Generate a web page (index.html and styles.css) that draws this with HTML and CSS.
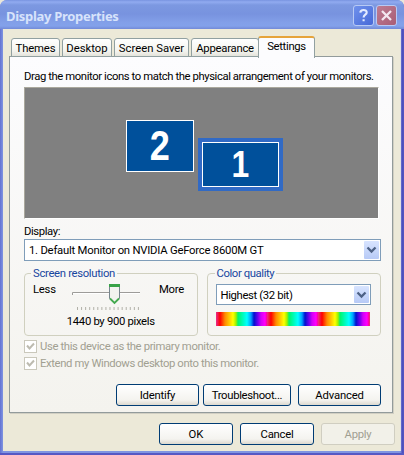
FILE: index.html
```html
<!DOCTYPE html>
<html lang="en">
<head>
<meta charset="utf-8">
<title>Display Properties</title>
<link rel="stylesheet" href="styles.css">
</head>
<body>
<main class="window">
  <header class="titlebar">
    <h1><span class="t-title">Display Properties</span></h1>
    <button class="cap help" aria-label="Help"><svg width="19" height="19" viewBox="0 0 19 19"><path d="M6.3 6.6C6.5 3 13 3.100 12.700 6.600C12.500 8.800 9.600 8.600 9.600 11.500M9.600 13.200V15.300" fill="none" stroke="#e4ebff" stroke-width="2.100"/></svg></button>
    <button class="cap close" aria-label="Close"><svg width="19" height="19" viewBox="0 0 19 19"><path d="M5 5L14 14M14 5L5 14" stroke="#f3e7f0" stroke-width="2.300"/></svg></button>
  </header>
  <div class="client">
    <nav class="tabs">
      <div class="tab themes"><span class="t-themes">Themes</span></div>
      <div class="tab desktop"><span class="t-desktop">Desktop</span></div>
      <div class="tab saver"><span class="t-saver">Screen Saver</span></div>
      <div class="tab appearance"><span class="t-appearance">Appearance</span></div>
      <div class="tab active"><span class="t-settings">Settings</span></div>
    </nav>
    <section class="page">
      <p class="hint"><span class="t-hint">Drag the monitor icons to match the physical arrangement of your monitors.</span></p>
      <div class="preview">
        <div class="monitor second"><span>2</span></div>
        <div class="monitor first"><span>1</span></div>
      </div>
      <div class="label"><span class="t-label">Display:</span></div>
      <div class="select"><span class="t-display">1. Default Monitor on NVIDIA GeForce 8600M GT</span><i class="drop"><svg width="15" height="17" viewBox="0 0 15 17"><path d="M3.500 6.500L7.500 10.500L11.500 6.500" fill="none" stroke="#4d6185" stroke-width="2.300"/></svg></i></div>
      <div class="groups">
        <fieldset class="group resolution">
          <legend><span class="t-res">Screen resolution</span></legend>
          <div class="slider-row">
            <span class="less t-less">Less</span>
            <svg class="slider" width="74" height="32" viewBox="0 0 74 32">
              <path d="M1.500 14V11.500H69" fill="none" stroke="#9d9c99"/>
              <path d="M2 12.500H69" stroke="#fff"/>
              <path d="M6 27.500H68" stroke="#b2b1a9" stroke-width="3" stroke-dasharray="1 3.060"/>
              <path d="M38.500 3.500H48.500V17.500L43.500 22.500L38.500 17.500Z" fill="#f3f3ef" stroke="#77858d"/>
              <path d="M38 4.500H49" stroke="#38a247" stroke-width="3"/>
              <path d="M39 17.500L43.500 22L48 17.500" fill="none" stroke="#45aa50" stroke-width="1.800"/>
            </svg>
            <span class="more t-more">More</span>
          </div>
          <div class="pixels"><span class="t-pixels">1440 by 900 pixels</span></div>
        </fieldset>
        <fieldset class="group quality">
          <legend><span class="t-quality">Color quality</span></legend>
          <div class="select small"><span class="t-highest">Highest (32 bit)</span><i class="drop"><svg width="15" height="17" viewBox="0 0 15 17"><path d="M3.500 6.500L7.500 10.500L11.500 6.500" fill="none" stroke="#4d6185" stroke-width="2.300"/></svg></i></div>
          <div class="spectrum"></div>
        </fieldset>
      </div>
      <div class="check"><i><svg width="11" height="11" viewBox="0 0 11 11"><path d="M2 4.500L4.500 7.500L9 2.500" fill="none" stroke="#bdbbb0" stroke-width="2"/></svg></i><span class="t-check1">Use this device as the primary monitor.</span></div>
      <div class="check"><i><svg width="11" height="11" viewBox="0 0 11 11"><path d="M2 4.500L4.500 7.500L9 2.500" fill="none" stroke="#bdbbb0" stroke-width="2"/></svg></i><span class="t-check2">Extend my Windows desktop onto this monitor.</span></div>
      <div class="actions">
        <button class="btn identify"><span class="t-identify">Identify</span></button>
        <button class="btn trouble"><span class="t-trouble">Troubleshoot...</span></button>
        <button class="btn advanced"><span class="t-advanced">Advanced</span></button>
      </div>
    </section>
    <footer class="footer">
      <button class="btn"><span>OK</span></button>
      <button class="btn"><span class="t-cancel">Cancel</span></button>
      <button class="btn" disabled><span class="t-apply">Apply</span></button>
    </footer>
  </div>
</main>
</body>
</html>
```
FILE: styles.css
```css
* { box-sizing: border-box; }
body { margin: 0; width: 404px; height: 455px; overflow: hidden; background: #e9e7da; font: 11.3px/14px Roboto, sans-serif; color: #000; }
button { font: inherit; color: inherit; padding: 0; margin: 0; }
span { white-space: nowrap; position: relative; top: 1px; }
.window { width: 404px; height: 455px; border-radius: 7px 7px 0 0; overflow: hidden; background: linear-gradient(90deg, #6372d1, #8095e2 3px, #8095e2 400px, #7582d9 401px, #4c4dba 402px, #5456c4); border-bottom: 2px solid #5658c4; }
.titlebar { height: 29px; display: flex; align-items: flex-start; padding: 5px 7px 0 6px; background: linear-gradient(#7894e0, #91abf0 2px, #7c98e1 5px, #7893df 14px, #829fe8 22px, #83a1ea 26px, #728ad8); }
h1 { flex: 1; margin: 3px 0 0; font: bold 13px/16px "Noto Sans", sans-serif; letter-spacing: -.3px; color: #d7e3fb; }
h1 span { top: 0; }
.cap { width: 21px; height: 21px; border: 1px solid #b8caf5; border-radius: 3px; }
.cap svg { display: block; }
.help { margin-right: 2px; background: linear-gradient(135deg, #6f91ec, #4769d7); }
.close { background: linear-gradient(135deg, #bd7c93, #a95d75); }
.client { height: 422px; margin: 0 3px; padding: 7px 6px 0; background: #ece9d8; border-right: 1px solid #e1e0e2; }
.tabs { display: flex; height: 21px; align-items: flex-end; padding-left: 2px; position: relative; z-index: 1; }
.tab { height: 19px; border: 1px solid #91a0a1; border-bottom-width: 0; border-radius: 3px 3px 0 0; background: linear-gradient(#fff, #f4f4ef 70%, #e4e3db); display: flex; justify-content: center; padding-top: 2px; margin-right: 2px; }
.tab:not(.active) { border-bottom-width: 1px; }
.themes { width: 49px; }
.desktop { width: 50px; }
.saver { width: 75px; }
.appearance { width: 68px; margin-right: -1px; }
.active { width: 57px; height: 22px; margin: 0 0 -1px; padding-top: 1px; background: #fcfcfe; border-bottom: 0; border-top: 2px solid #e6a43b; }
.page { width: 384px; height: 357px; margin-top: -1px; border: 1px solid #929b9b; background: linear-gradient(#fcfcfe, #f4f3ee); padding: 12px 11px 0 14px; box-shadow: 1px 1px #d1cfc3; }
p { margin: 0 0 4px; height: 14px; }
.preview { height: 132px; width: 355px; background: #808080; border: 1px solid #aaa89d; border-right-color: #fff; border-bottom-color: #fff; position: relative; }
.monitor { position: absolute; background: #00509b; color: #fff; display: grid; place-items: center; font: bold 42px/38px "Liberation Sans", sans-serif; }
.monitor span { transform: scaleX(.86); top: 0; }
.second { left: 101px; top: 32px; width: 68px; height: 52px; border: 1px solid #fff; }
.first { left: 177px; top: 54px; width: 77px; height: 45px; border: 1px solid #fff; outline: 4px solid #316ac5; font-size: 37px; }
.label { height: 14px; margin: 5px 0 1px; }
.select { width: 357px; height: 22px; border: 1px solid #7f9db9; background: #fff; display: flex; align-items: center; padding: 0 1px 0 4px; justify-content: space-between; }
.drop { width: 15px; height: 18px; border-radius: 1px; background: linear-gradient(#d8e4ff, #b7caf6); }
.drop svg { display: block; }
.groups { display: flex; gap: 9px; margin-top: 5px; }
.group { margin: 0; min-width: 0; height: 70px; border: 1px solid #d0d0bf; border-radius: 4px; padding: 0 8px; }
.resolution { width: 174px; }
.quality { width: 175px; }
legend { height: 14px; padding: 0 2px; margin-left: -2px; color: #1746a0; }
.quality legend { margin-left: -1px; }
.slider-row { display: flex; height: 33px; padding-top: 1px; }
.less { width: 38px; padding-top: 1px; }
.more { padding: 1px 0 0 14px; }
.pixels { height: 14px; margin-top: 1px; text-align: center; }
.small { width: 155px; height: 21px; margin-top: 4px; }
.small .drop { height: 17px; }
.spectrum { width: 154px; height: 14px; margin-top: 7px; background: repeating-linear-gradient(90deg, #e92d8c 0, #f00 4px, #ff8900 9px, #ff0 17px, #a0f000 20px, #00f56b 22px, #0ff 31px, #009dff 35px, #0011ce 38px, #7000f0 42px, #d000f8 45px, #f0f 49px, #ff0090 51px); }
.check { height: 14px; display: flex; align-items: center; margin-top: 3px; color: #a19f91; }
.check i { width: 13px; height: 13px; margin-right: 3px; border: 1px solid #cac8bb; background: #fff; }
.check svg { display: block; }
.actions { display: flex; margin: 14px 0 0 92px; }
.btn { width: 74px; height: 22px; border: 1px solid #003c74; border-radius: 3px; background: linear-gradient(#fff, #f4f3ef 75%, #dcd9cf); line-height: 18px; }
.identify, .advanced { width: 83px; }
.trouble { width: 88px; margin: 0 5px 0 4px; }
.advanced { margin-left: 2px; }
.footer { display: flex; justify-content: flex-end; gap: 7px; padding-top: 10px; margin-right: -1px; }
.btn:disabled { border-color: #d0cec1; background: #f2f1e9; color: #a19f91; }

/* Tracking that approximates the dialog font's narrow metrics */
.t-hint { letter-spacing: -.41px; }
.t-label, .t-quality { letter-spacing: -.4px; }
.t-display { letter-spacing: -.23px; }
.t-res, .t-pixels, .t-trouble, .t-settings { letter-spacing: -.32px; }
.t-highest, .t-check1 { letter-spacing: -.36px; }
.t-check2 { letter-spacing: -.38px; }
.t-less, .t-more, .t-identify, .t-cancel, .t-apply, .t-appearance { letter-spacing: -.25px; }
.t-themes, .t-advanced { letter-spacing: -.15px; }
```
